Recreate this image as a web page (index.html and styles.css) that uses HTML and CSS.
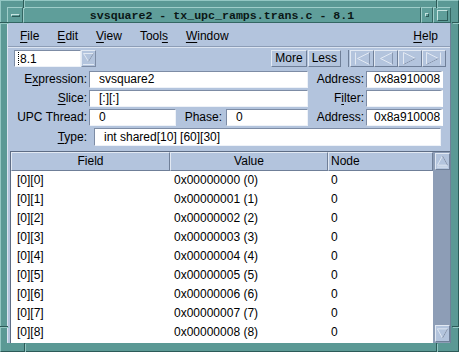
FILE: index.html
```html
<!DOCTYPE html>
<html lang="en">
<head>
    <meta charset="UTF-8">
    <title>svsquare2 - tx_upc_ramps.trans.c - 8.1</title>
    <link rel="stylesheet" href="styles.css">
</head>
<body>
<div class="frame">
    <span class="notch notch-v" style="left:22px;top:-1px"></span>
    <span class="notch notch-v" style="left:435px;top:-1px"></span>
    <span class="notch notch-h" style="left:-1px;top:21px"></span>
    <span class="notch notch-h" style="left:451px;top:21px"></span>
    <span class="notch notch-v" style="left:23px;top:342px"></span>
    <span class="notch notch-v" style="left:435px;top:342px"></span>
    <span class="notch notch-h" style="left:-1px;top:325px"></span>
    <span class="notch notch-h" style="left:451px;top:325px"></span>

    <div class="titlebar">
        <div class="wm-btn wm-menu"><span class="wm-bar"></span></div>
        <div class="wm-title">svsquare2 - tx_upc_ramps.trans.c - 8.1</div>
        <div class="wm-btn wm-min"><span class="wm-dot"></span></div>
        <div class="wm-btn wm-max"><span class="wm-box"></span></div>
    </div>

    <div class="client">
        <div class="menubar">
            <span class="menu"><u>F</u>ile</span>
            <span class="menu"><u>E</u>dit</span>
            <span class="menu"><u>V</u>iew</span>
            <span class="menu">Tool<u>s</u></span>
            <span class="menu"><u>W</u>indow</span>
            <span class="menu help"><u>H</u>elp</span>
        </div>

        <div class="toolbar">
            <div class="combo">
                <div class="combo-field"><span class="caret"></span>8.1</div>
                <div class="combo-arrow">
                    <svg width="13" height="15" viewBox="0 0 13 15">
                        <polygon points="1.5,2.5 11.5,2.5 6.5,10.5" fill="none" stroke="#e2e9f3"/>
                        <line x1="6.5" y1="10.5" x2="11.5" y2="2.5" stroke="#8797b0"/>
                        <line x1="1" y1="13.5" x2="12" y2="13.5" stroke="#e2e9f3"/>
                    </svg>
                </div>
            </div>
            <div class="spacer"></div>
            <div class="btn">More</div>
            <div class="btn">Less</div>
            <div class="nav">
                <div class="nav-btn">
                    <svg width="18" height="13" viewBox="0 0 18 13">
                        <line x1="2.5" y1="0.5" x2="2.5" y2="12.5" stroke="#e2e9f3"/>
                        <polygon points="16.5,0.5 4.5,6.5 16.5,12.5" fill="none" stroke="#e2e9f3"/>
                        <line x1="16.5" y1="0.5" x2="16.5" y2="12.5" stroke="#8797b0"/>
                    </svg>
                </div>
                <div class="nav-btn">
                    <svg width="18" height="13" viewBox="0 0 18 13">
                        <polygon points="15.5,0.5 3.5,6.5 15.5,12.5" fill="none" stroke="#e2e9f3"/>
                        <line x1="15.5" y1="0.5" x2="15.5" y2="12.5" stroke="#8797b0"/>
                    </svg>
                </div>
                <div class="nav-btn">
                    <svg width="18" height="13" viewBox="0 0 18 13">
                        <polygon points="2.5,0.5 14.5,6.5 2.5,12.5" fill="none" stroke="#e2e9f3"/>
                        <line x1="2.5" y1="12.5" x2="14.5" y2="6.5" stroke="#8797b0"/>
                    </svg>
                </div>
                <div class="nav-btn">
                    <svg width="18" height="13" viewBox="0 0 18 13">
                        <polygon points="1.5,0.5 13.5,6.5 1.5,12.5" fill="none" stroke="#e2e9f3"/>
                        <line x1="1.5" y1="12.5" x2="13.5" y2="6.5" stroke="#8797b0"/>
                        <line x1="15.5" y1="0.5" x2="15.5" y2="12.5" stroke="#e2e9f3"/>
                    </svg>
                </div>
            </div>
        </div>

        <div class="form">
            <div class="lbl">E<u>x</u>pression:</div>
            <div class="field">svsquare2</div>
            <div class="lbl">Address:</div>
            <div class="field field-addr">0x8a910008</div>

            <div class="lbl"><u>S</u>lice:</div>
            <div class="field">[:][:]</div>
            <div class="lbl">F<u>i</u>lter:</div>
            <div class="field field-addr"></div>

            <div class="lbl">UPC Thread:</div>
            <div class="split">
                <div class="field field-thread">0</div>
                <div class="lbl lbl-phase">Phase:</div>
                <div class="field field-phase">0</div>
            </div>
            <div class="lbl">Address:</div>
            <div class="field field-addr">0x8a910008</div>

            <div class="lbl lbl-type"><u>T</u>ype:</div>
            <div class="field field-type">int shared[10] [60][30]</div>
        </div>

        <div class="table">
            <div class="tgrid">
                <div class="thead">
                    <div class="th th-center">Field</div>
                    <div class="th th-center">Value</div>
                    <div class="th th-left">Node</div>
                </div>
                <div class="row"><span class="c1">[0][0]</span><span class="c2">0x00000000 (0)</span><span class="c3">0</span></div>
                <div class="row"><span class="c1">[0][1]</span><span class="c2">0x00000001 (1)</span><span class="c3">0</span></div>
                <div class="row"><span class="c1">[0][2]</span><span class="c2">0x00000002 (2)</span><span class="c3">0</span></div>
                <div class="row"><span class="c1">[0][3]</span><span class="c2">0x00000003 (3)</span><span class="c3">0</span></div>
                <div class="row"><span class="c1">[0][4]</span><span class="c2">0x00000004 (4)</span><span class="c3">0</span></div>
                <div class="row"><span class="c1">[0][5]</span><span class="c2">0x00000005 (5)</span><span class="c3">0</span></div>
                <div class="row"><span class="c1">[0][6]</span><span class="c2">0x00000006 (6)</span><span class="c3">0</span></div>
                <div class="row"><span class="c1">[0][7]</span><span class="c2">0x00000007 (7)</span><span class="c3">0</span></div>
                <div class="row"><span class="c1">[0][8]</span><span class="c2">0x00000008 (8)</span><span class="c3">0</span></div>
            </div>
            <div class="scrollbar">
                <div class="sb-btn">
                    <svg width="14" height="15" viewBox="0 0 14 15">
                        <polygon points="7,1.5 1.5,11.5 12.5,11.5" fill="none" stroke="#e2e9f3"/>
                        <line x1="7" y1="1.5" x2="12.5" y2="11.5" stroke="#7d8da6"/>
                        <line x1="1" y1="13.5" x2="13" y2="13.5" stroke="#e2e9f3"/>
                    </svg>
                </div>
                <div class="sb-btn">
                    <svg width="14" height="15" viewBox="0 0 14 15">
                        <polygon points="1.5,2.5 12.5,2.5 7,12.5" fill="none" stroke="#e2e9f3"/>
                        <line x1="7" y1="12.5" x2="12.5" y2="2.5" stroke="#7d8da6"/>
                    </svg>
                </div>
            </div>
        </div>
    </div>
</div>
</body>
</html>
```

FILE: styles.css
```css
* {
    box-sizing: border-box;
}

body {
    margin: 0;
    font-family: "Liberation Sans", Arial, sans-serif;
    font-size: 12px;
    color: #000;
    background: #5b9995;
}

u {
    text-underline-offset: 2px;
}

/* window manager frame */
.frame {
    position: relative;
    width: 459px;
    height: 352px;
    background: #5b9995;
    border: 1px solid;
    border-color: #93c7c3 #2c5b58 #2c5b58 #93c7c3;
    padding: 6px 7px 8px 6px;
    display: flex;
    flex-direction: column;
}

.notch {
    position: absolute;
    background: #2c5b58;
    box-shadow: 1px 1px 0 #93c7c3;
}

.notch-v {
    width: 1px;
    height: 8px;
}

.notch-h {
    width: 8px;
    height: 1px;
}

.titlebar {
    display: flex;
    height: 16px;
    background: #5f9e9a;
}

.wm-btn {
    width: 16px;
    border: 1px solid;
    border-color: #9fcdc9 #346663 #346663 #9fcdc9;
    display: flex;
    align-items: center;
    justify-content: center;
}

.wm-min {
    width: 12px;
}

.wm-max {
    width: 18px;
}

.wm-bar {
    width: 9px;
    height: 3px;
    border: 1px solid;
    border-color: #c6e4e1 #2c5b58 #2c5b58 #c6e4e1;
}

.wm-dot {
    width: 4px;
    height: 4px;
    border: 1px solid;
    border-color: #c6e4e1 #2c5b58 #2c5b58 #c6e4e1;
}

.wm-box {
    width: 11px;
    height: 11px;
    border: 1px solid;
    border-color: #c6e4e1 #2c5b58 #2c5b58 #c6e4e1;
}

.wm-title {
    flex: 1;
    border: 1px solid;
    border-color: #9fcdc9 #346663 #346663 #9fcdc9;
    text-align: center;
    font-family: "Liberation Mono", "DejaVu Sans Mono", monospace;
    font-weight: bold;
    font-size: 11.6px;
    line-height: 15px;
    color: #0a1716;
}

/* application area */
.client {
    flex: 1;
    display: flex;
    flex-direction: column;
    background: #b3c4dd;
    border-left: 1px solid #dbe4f1;
    border-right: 1px solid #6f7f98;
}

.menubar {
    display: flex;
    align-items: center;
    height: 24px;
    padding: 2px 3px 0 3px;
    border-bottom: 1px solid #8d9db6;
}

.menu {
    padding: 0 9px;
}

.help {
    margin-left: auto;
}

.toolbar {
    display: flex;
    align-items: center;
    height: 22px;
    padding: 0 4px 0 6px;
    border-top: 1px solid #dbe4f1;
}

.combo {
    display: flex;
    width: 82px;
    height: 17px;
}

.combo-field {
    flex: 1;
    display: flex;
    align-items: center;
    background: #fff;
    border: 1px solid;
    border-color: #7d8ca5 #eef2f8 #eef2f8 #7d8ca5;
    padding-left: 3px;
}

.caret {
    width: 1px;
    height: 13px;
    border-left: 1px dotted #000;
    margin-right: 1px;
}

.combo-arrow {
    width: 15px;
    display: flex;
    align-items: center;
    justify-content: center;
    border: 1px solid;
    border-color: #e2e9f3 #7d8ca5 #7d8ca5 #e2e9f3;
}

.spacer {
    flex: 1;
}

.btn {
    height: 17px;
    line-height: 15px;
    padding: 0 3px;
    border: 1px solid;
    border-color: #e2e9f3 #6f7f98 #6f7f98 #e2e9f3;
    margin-left: 1px;
}

.nav {
    display: flex;
    margin-left: 7px;
    border-left: 1px solid #6f7f98;
    padding-left: 1px;
}

.nav-btn {
    width: 24px;
    height: 17px;
    display: flex;
    align-items: center;
    justify-content: center;
    border: 1px solid;
    border-color: #e2e9f3 #6f7f98 #6f7f98 #e2e9f3;
}

/* expression form */
.form {
    display: grid;
    grid-template-columns: 81px 219px 58px 77px;
    grid-template-rows: 17px 17px 17px 18px;
    row-gap: 2px;
    margin-top: 2px;
}

.lbl {
    text-align: right;
    padding-right: 2px;
    line-height: 17px;
    white-space: nowrap;
}

.lbl-phase {
    flex: 1;
    padding-right: 4px;
}

.lbl-type {
    line-height: 18px;
}

.field {
    background: #fff;
    border: 1px solid;
    border-color: #7d8ca5 #eef2f8 #eef2f8 #7d8ca5;
    padding-left: 9px;
    line-height: 15px;
    white-space: nowrap;
    overflow: hidden;
}

.field-addr {
    padding-left: 7px;
    border-right: 3px solid #fff;
}

.split {
    display: flex;
}

.field-thread {
    width: 87px;
}

.field-phase {
    width: 82px;
}

.field-type {
    grid-column: 2 / 5;
    margin: 0 2px 0 5px;
    line-height: 16px;
}

/* data table */
.table {
    flex: 1;
    display: flex;
    margin: 5px 0 0 2px;
    border-top: 1px solid #5e6d85;
    border-left: 1px solid #5e6d85;
    background: #fff;
    overflow: hidden;
}

.tgrid {
    flex: 1;
    display: flex;
    flex-direction: column;
    overflow: hidden;
}

.thead {
    display: grid;
    grid-template-columns: 159px 158px 1fr;
    height: 19px;
    flex: none;
    background: #b3c4dd;
}

.th {
    border: 1px solid;
    border-color: #e2e9f3 #6f7f98 #6f7f98 #e2e9f3;
    line-height: 16px;
}

.th-center {
    text-align: center;
}

.th-left {
    padding-left: 2px;
}

.row {
    display: grid;
    grid-template-columns: 159px 158px 1fr;
    height: 19px;
    flex: none;
    line-height: 19px;
    white-space: nowrap;
}

.c1 {
    padding-left: 6px;
}

.c2 {
    padding-left: 4px;
}

.c3 {
    padding-left: 3px;
}

.scrollbar {
    width: 17px;
    display: flex;
    flex-direction: column;
    justify-content: space-between;
    background: #8d9db6;
    padding: 1px 0 1px 2px;
}

.sb-btn {
    height: 17px;
    display: flex;
    align-items: center;
    justify-content: center;
    background: #b3c4dd;
    border: 1px solid;
    border-color: #e2e9f3 #6f7f98 #6f7f98 #e2e9f3;
}
```
